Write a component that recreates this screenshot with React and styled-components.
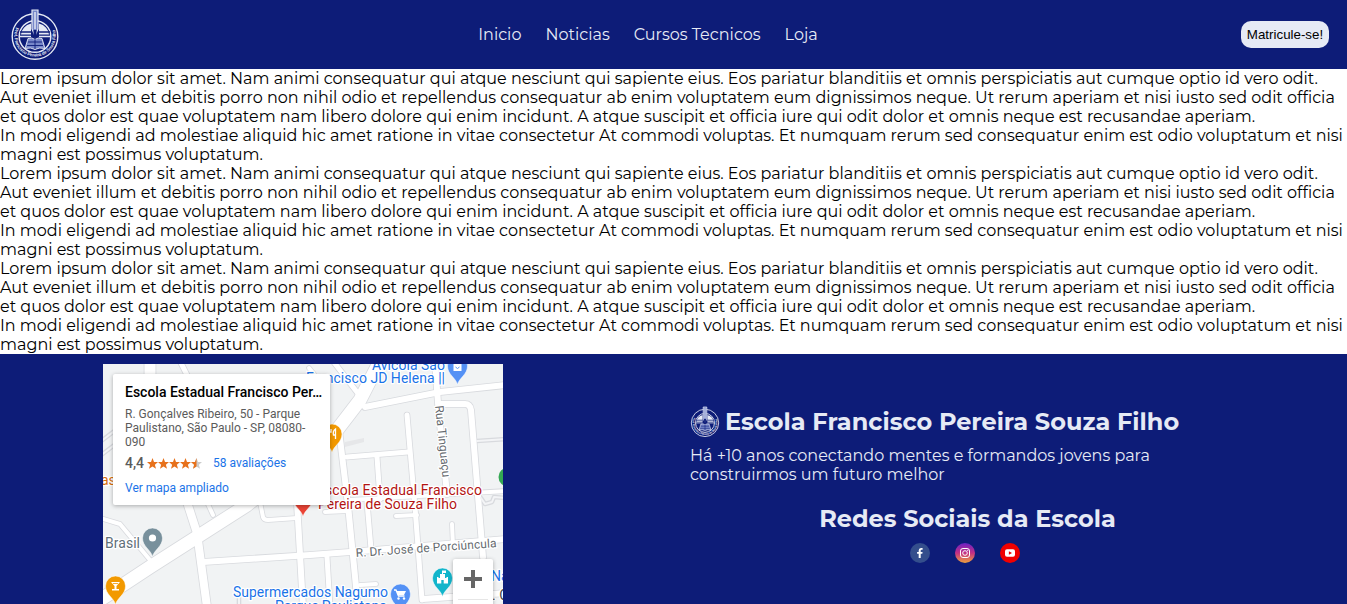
import React from 'react';
import styled, { createGlobalStyle } from 'styled-components';

const navy = '#0d1c78';
const pale = '#e6eaf5';

const GlobalStyle = createGlobalStyle`
  * { box-sizing: border-box; margin: 0; padding: 0; }
  html, body { overflow: hidden; background: #fff; }
  body { font-family: Montserrat, Inter, "Liberation Sans", sans-serif; font-size: 16px; line-height: 19px; color: #000; }
`;

const Page = styled.div`
  width: 1347px;
  height: 604px;
  overflow: hidden;
  display: flex;
  flex-direction: column;
`;

const Header = styled.header`
  flex: none;
  height: 69px;
  padding: 0 18px 0 10px;
  display: flex;
  align-items: center;
  justify-content: space-between;
  background: ${navy};
  color: ${pale};
`;

const Nav = styled.nav`
  display: flex;
  gap: 24px;
  margin-right: 5px;
`;

const EnrollButton = styled.button`
  width: 88px;
  height: 27px;
  border: 0;
  border-radius: 10px;
  background: ${pale};
  color: #000;
  white-space: nowrap;
  font: 13.333px "Liberation Sans", Arial, sans-serif;
`;

const Article = styled.main`
  flex: none;
  height: 285px;
`;

const Line = styled.div`
  height: 19px;
  white-space: pre;
`;

const Footer = styled.footer`
  flex: none;
  height: 250px;
  display: flex;
  background: ${navy};
  color: ${pale};
`;

const MapFrame = styled.section`
  position: relative;
  flex: none;
  width: 400px;
  height: 240px;
  margin: 10px 0 0 103px;
  overflow: hidden;
  background: #f1f3f4;
  font-family: Roboto, sans-serif;
`;

const MapDrawing = styled.svg`
  display: block;
`;

const PlaceCard = styled.div`
  position: absolute;
  left: 10px;
  top: 10px;
  width: 217px;
  height: 131px;
  padding: 10px 0 0 12px;
  border-radius: 2px;
  background: #fff;
  box-shadow: 0 1px 4px rgba(0, 0, 0, 0.3);
  font-size: 12px;
  line-height: 14px;
  color: #5b5b5b;
`;

const PlaceName = styled.h3`
  font-size: 14px;
  line-height: 17px;
  font-weight: 500;
  color: #000;
  white-space: nowrap;
`;

const Address = styled.p`
  margin-top: 6px;
  white-space: pre;
`;

const Rating = styled.div`
  display: flex;
  align-items: center;
  height: 16px;
  margin-top: 6px;
`;

const Score = styled.span`
  width: 22px;
  font-size: 14px;
  font-weight: 500;
`;

const MapLink = styled.a`
  color: #1a73e8;
  white-space: nowrap;
`;

const Stars = styled.svg`
  margin-right: 11px;
`;

const Larger = styled.div`
  margin-top: 10px;
`;

const ZoomControl = styled.div`
  position: absolute;
  left: 350px;
  top: 195px;
  width: 40px;
  height: 81px;
  border-radius: 2px;
  background: #fff;
  box-shadow: 0 1px 4px rgba(0, 0, 0, 0.3);
`;

const Info = styled.section`
  width: 555px;
  margin-left: 187px;
  padding-top: 51px;
`;

const SchoolTitle = styled.div`
  display: flex;
  align-items: center;
  height: 33px;
  gap: 5px;
`;

const Heading = styled.h2`
  font-size: 24px;
  line-height: 30px;
  font-weight: 700;
  white-space: nowrap;
`;

const Motto = styled.p`
  margin-top: 8px;
`;

const Social = styled.div`
  display: flex;
  flex-direction: column;
  align-items: center;
  margin-top: 20px;
`;

const SocialIcons = styled.div`
  display: flex;
  gap: 25px;
  margin: 9px 5px 0 0;
  svg { display: block; }
`;

function Logo({ width, height, id }) {
  return (
    <svg width={width} height={height} viewBox="0 0 50 52" fill="none" stroke={pale}>
      <circle cx="25" cy="27.5" r="22.8" strokeWidth="1.4" />
      <circle cx="25" cy="27.5" r="15.8" strokeWidth="1.5" />
      <path d="M11 25.500a14 12 0 0 1 10-11v11zM39 25.500a14 12 0 0 0-10-11v11z" fill={pale} stroke="none" />
      <path d="M10 23h11M29 23h11" stroke={navy} strokeWidth="1.300" />
      <path d="M10 27.500h11M29 27.500h11" strokeWidth="1.300" />
      <path d="M22 1h6v19l-3 7-3-7z" fill="#7787c9" strokeWidth="1.2" />
      <path d="M25 3v17" strokeWidth="1.4" />
      <path d="M23.500 21h3v7h-3z" fill={navy} stroke="none" />
      <path d="M18 29.500q4-1.500 7 1 3-2.500 7-1l3 10q-6-1.500-10 1-4-2.500-10-1z" fill="#7787c9" strokeWidth=".9" />
      <path d="M25 30v10M18 33h14M17 36.500h16" stroke={navy} strokeWidth=".9" />
      <path id={id} d="M7.500 19a19.200 19.200 0 1 0 35 0" stroke="none" />
      <text fontFamily="Liberation Sans, sans-serif" fontSize="4.500" fontWeight="700" fill={pale} stroke="none" dy="1.500">
        <textPath href={`#${id}`} textLength="74">Prof. Francisco Pereira de Souza Filho</textPath>
      </text>
    </svg>
  );
}

const roads = [
  ['M277-3L257 36 234 66 144 141 94 173 47 203-3 236', 13],
  ['M84 138L94 169 104 243', 8],
  ['M262 43L337 28 403 21', 6],
  ['M230-3L260 36', 5],
  ['M206 4L214 14', 4],
  ['M47-3V15', 11],
  ['M77-3L86 15', 5],
  ['M236 66L245 141 255 243', 6],
  ['M244 93L305 88', 5],
  ['M304 51L312 143 319 236', 5],
  ['M274 93L277 135', 5],
  ['M264 138L268 185', 5],
  ['M332-3L335 39 344 130', 6],
  ['M337 40H362Q367 40 368 46L380 193', 6],
  ['M374 77L403 75', 3],
  ['M247 136L403 127', 4],
  ['M100 198L207 191 247 188 403 175', 6],
  ['M349 160L350 182', 4],
  ['M293 152L314 151', 4],
  ['M222 148L245 147', 4],
  ['M224 193L227 243', 5],
  ['M257 221L273 220', 4],
  ['M320 235L403 229', 6],
  ['M194 138L200 243', 6],
  ['M157 138L160 153Q161 156 165 156L194 154', 4],
  ['M-3 154L17 160 47 196', 4],
  ['M-3 78L14 65', 3],
  ['M-3 92L14 79', 3],
  ['M104 138L110 151', 4],
  ['M378 134L382 140 389 138 391 133 403 134', 3],
  ['M136 231V243', 3],
];

function Pin({ x, y, color, children }) {
  return (
    <g transform={`translate(${x} ${y})`}>
      <path d="M0 18.500C-1.500 12-10 8.500-10 0a10 10 0 0 1 20 0C10 8.500 1.500 12 0 18.500z" fill={color} stroke="#fff" strokeWidth=".5" />
      {children}
    </g>
  );
}

const Label = styled.text`
  font: ${(p) => p.$size || 14}px Roboto, sans-serif;
  fill: ${(p) => p.$color};
  stroke: #fff;
  stroke-width: 2.5px;
  stroke-linejoin: round;
  paint-order: stroke;
`;

function SchoolMap() {
  return (
    <MapDrawing width="400" height="240" viewBox="0 0 400 240">
      <rect width="400" height="240" fill="#f1f3f4" />
      <g fill="none" stroke="#d8dade" strokeLinecap="round" strokeLinejoin="round">
        {roads.map(([d, w]) => <path key={d} d={d} strokeWidth={w + 1.6} />)}
      </g>
      <g fill="none" stroke="#fff" strokeLinecap="round" strokeLinejoin="round">
        {roads.map(([d, w]) => <path key={d} d={d} strokeWidth={w < 4 ? w - 1 : w} stroke={w < 4 ? '#f3f4f6' : '#fff'} />)}
      </g>
      <path d="M242 78l19-4v4l-19 5z" fill="#e6e7e9" />
      <Label $color="#1a73e8" x="269" y="5.5" textLength="73">Avícola São</Label>
      <Label $color="#1a73e8" x="203" y="19" textLength="139">Francisco JD Helena ||</Label>
      <Label $color="#b31412" x="214" y="131" textLength="165">Escola Estadual Francisco</Label>
      <Label $color="#b31412" x="215" y="145" textLength="139">Pereira de Souza Filho</Label>
      <Label $color="#5f6f79" x="2" y="184" textLength="35">Brasil</Label>
      <Label $color="#1a73e8" x="130" y="233" textLength="155">Supermercados Nagumo</Label>
      <Label $color="#1a73e8" x="172" y="247" textLength="112">Parque Paulistano</Label>
      <Label $color="#d56e0c" x="-2" y="121">as</Label>
      <Label $color="#1a73e8" x="388" y="217">Na</Label>
      <Label $color="#444" x="389" y="236">. C</Label>
      <Label $color="#666b70" $size={12} transform="translate(332 42) rotate(84)" textLength="72">Rua Tinguaçu</Label>
      <Label $color="#666b70" $size={12} transform="translate(253 193) rotate(-4)" textLength="141">R. Dr. José de Porciúncula</Label>
      <Pin x={354.5} y={2} color="#5491f5">
        <path d="M-4-2h8v7h-8z" fill="#fff" /><path d="M-2 1q2 3 4 0" fill="none" stroke="#5491f5" />
      </Pin>
      <Pin x={229} y={70} color="#f29900">
        <path d="M-3-5v9M-5-5v3h4v-3M3.500 5v-10q-3 2-2 6h2" stroke="#fff" fill="none" strokeWidth="1.300" />
      </Pin>
      <Pin x={200} y={134} color="#ea4335" />
      <Pin x={49.5} y={174} color="#78909c"><circle r="3.600" fill="#fff" /></Pin>
      <Pin x={12.5} y={222} color="#f29900">
        <path d="M-4.500-4h9L1 0v3h2.500v1.500h-7V3H-1V0z" fill="#fff" /><path d="M-2.500-2.500h5" stroke="#f29900" strokeWidth=".8" />
      </Pin>
      <Pin x={339.5} y={214} color="#12b5cb">
        <path d="M-5.500 5.500V-1h1.500v1h1.500v-4H-.5v-3.500h4V-5H.5v1h2v4H4v-1h1.500v6.500H1.200V2h-2.400v3.500z" fill="#fff" />
      </Pin>
      <Pin x={297.500} y={230} color="#5491f5">
        <path d="M-6.500-4h2l2.500 6h6" fill="none" stroke="#fff" strokeWidth="1.300" />
        <path d="M-4-3h9.500L3.500 1h-6z" fill="#fff" /><circle cx="-2" cy="4.500" r="1.200" fill="#fff" /><circle cx="3.500" cy="4.500" r="1.200" fill="#fff" />
      </Pin>
      <circle cx="405" cy="113" r="9.500" fill="#34a853" />
    </MapDrawing>
  );
}

const star = 'M5.500 0L7 3.900 11 4.100 7.900 6.700 9 10.700 5.500 8.400 2 10.700 3.100 6.700 0 4.100 4 3.900z';

const paragraph = [
  'Lorem ipsum dolor sit amet. Nam animi consequatur qui atque nesciunt qui sapiente eius. Eos pariatur blanditiis et omnis perspiciatis aut cumque optio id vero odit.',
  'Aut eveniet illum et debitis porro non nihil odio et repellendus consequatur ab enim voluptatem eum dignissimos neque. Ut rerum aperiam et nisi iusto sed odit officia',
  'et quos dolor est quae voluptatem nam libero dolore qui enim incidunt. A atque suscipit et officia iure qui odit dolor et omnis neque est recusandae aperiam.',
  'In modi eligendi ad molestiae aliquid hic amet ratione in vitae consectetur At commodi voluptas. Et numquam rerum sed consequatur enim est odio voluptatum et nisi',
  'magni est possimus voluptatum.',
];

const links = ['Inicio', 'Noticias', 'Cursos Tecnicos', 'Loja'];

export default function App() {
  return (
    <Page>
      <GlobalStyle />
      <Header>
        <Logo width={50} height={52} id="seal-header" />
        <Nav>{links.map((t) => <a key={t}>{t}</a>)}</Nav>
        <EnrollButton>Matricule-se!</EnrollButton>
      </Header>
      <Article>
        {[0, 1, 2].map((n) => paragraph.map((t, i) => <Line key={`${n}-${i}`}>{t}</Line>))}
      </Article>
      <Footer>
        <MapFrame>
          <SchoolMap />
          <PlaceCard>
            <PlaceName>Escola Estadual Francisco Per…</PlaceName>
            <Address>{'R. Gonçalves Ribeiro, 50 - Parque\nPaulistano, São Paulo - SP, 08080-\n090'}</Address>
            <Rating>
              <Score>4,4</Score>
              <Stars width="55" height="11" viewBox="0 0 55 11">
                {[0, 1, 2, 3].map((n) => <path key={n} d={star} transform={`translate(${n * 11} 0)`} fill="#e7711b" />)}
                <path d={star} transform="translate(44 0)" fill="#ccc" />
                <path d="M49.500 0V8.400L46 10.700 47.100 6.700 44 4.100 48 3.900z" fill="#e7711b" />
              </Stars>
              <MapLink>58 avaliações</MapLink>
            </Rating>
            <Larger><MapLink>Ver mapa ampliado</MapLink></Larger>
          </PlaceCard>
          <ZoomControl>
            <svg width="40" height="41" viewBox="0 0 40 41">
              <path d="M11 20h18M20 11v18" stroke="#666" strokeWidth="4" />
              <path d="M5 40.500h30" stroke="#e6e6e6" />
            </svg>
          </ZoomControl>
        </MapFrame>
        <Info>
          <SchoolTitle>
            <Logo width={30} height={32} id="seal-footer" />
            <Heading>Escola Francisco Pereira Souza Filho</Heading>
          </SchoolTitle>
          <Motto>
            <Line>Há +10 anos conectando mentes e formandos jovens para</Line>
            <Line>construirmos um futuro melhor</Line>
          </Motto>
          <Social>
            <Heading>Redes Sociais da Escola</Heading>
            <SocialIcons>
              <svg width="20" height="20" viewBox="0 0 20 20">
                <circle cx="10" cy="10" r="10" fill="#344e8c" />
                <path d="M8.700 15v-4.300H7.100V8.900h1.600V7.500Q8.700 5 11 5h1.600v1.700h-1.100q-.8 0-.8.900v1.300h1.900l-.3 1.800h-1.600V15z" fill="#fff" />
              </svg>
              <svg width="20" height="20" viewBox="0 0 20 20">
                <defs><linearGradient id="insta" x2="0" y2="1"><stop stopColor="#6a22c4" /><stop offset=".5" stopColor="#c42f83" /><stop offset="1" stopColor="#eda23c" /></linearGradient></defs>
                <circle cx="10" cy="10" r="10" fill="url(#insta)" />
                <g fill="none" stroke="#fff"><rect x="5.500" y="5.500" width="9" height="9" rx="2.500" /><circle cx="10" cy="10" r="2.300" /></g>
                <circle cx="12.700" cy="7.300" r=".6" fill="#fff" />
              </svg>
              <svg width="20" height="20" viewBox="0 0 20 20">
                <circle cx="10" cy="10" r="10" fill="#f00000" />
                <rect x="5" y="6.300" width="10" height="7.400" rx="2" fill="#fff" />
                <path d="M8.900 8.200v3.600L12 10z" fill="#f00000" />
              </svg>
            </SocialIcons>
          </Social>
        </Info>
      </Footer>
    </Page>
  );
}
